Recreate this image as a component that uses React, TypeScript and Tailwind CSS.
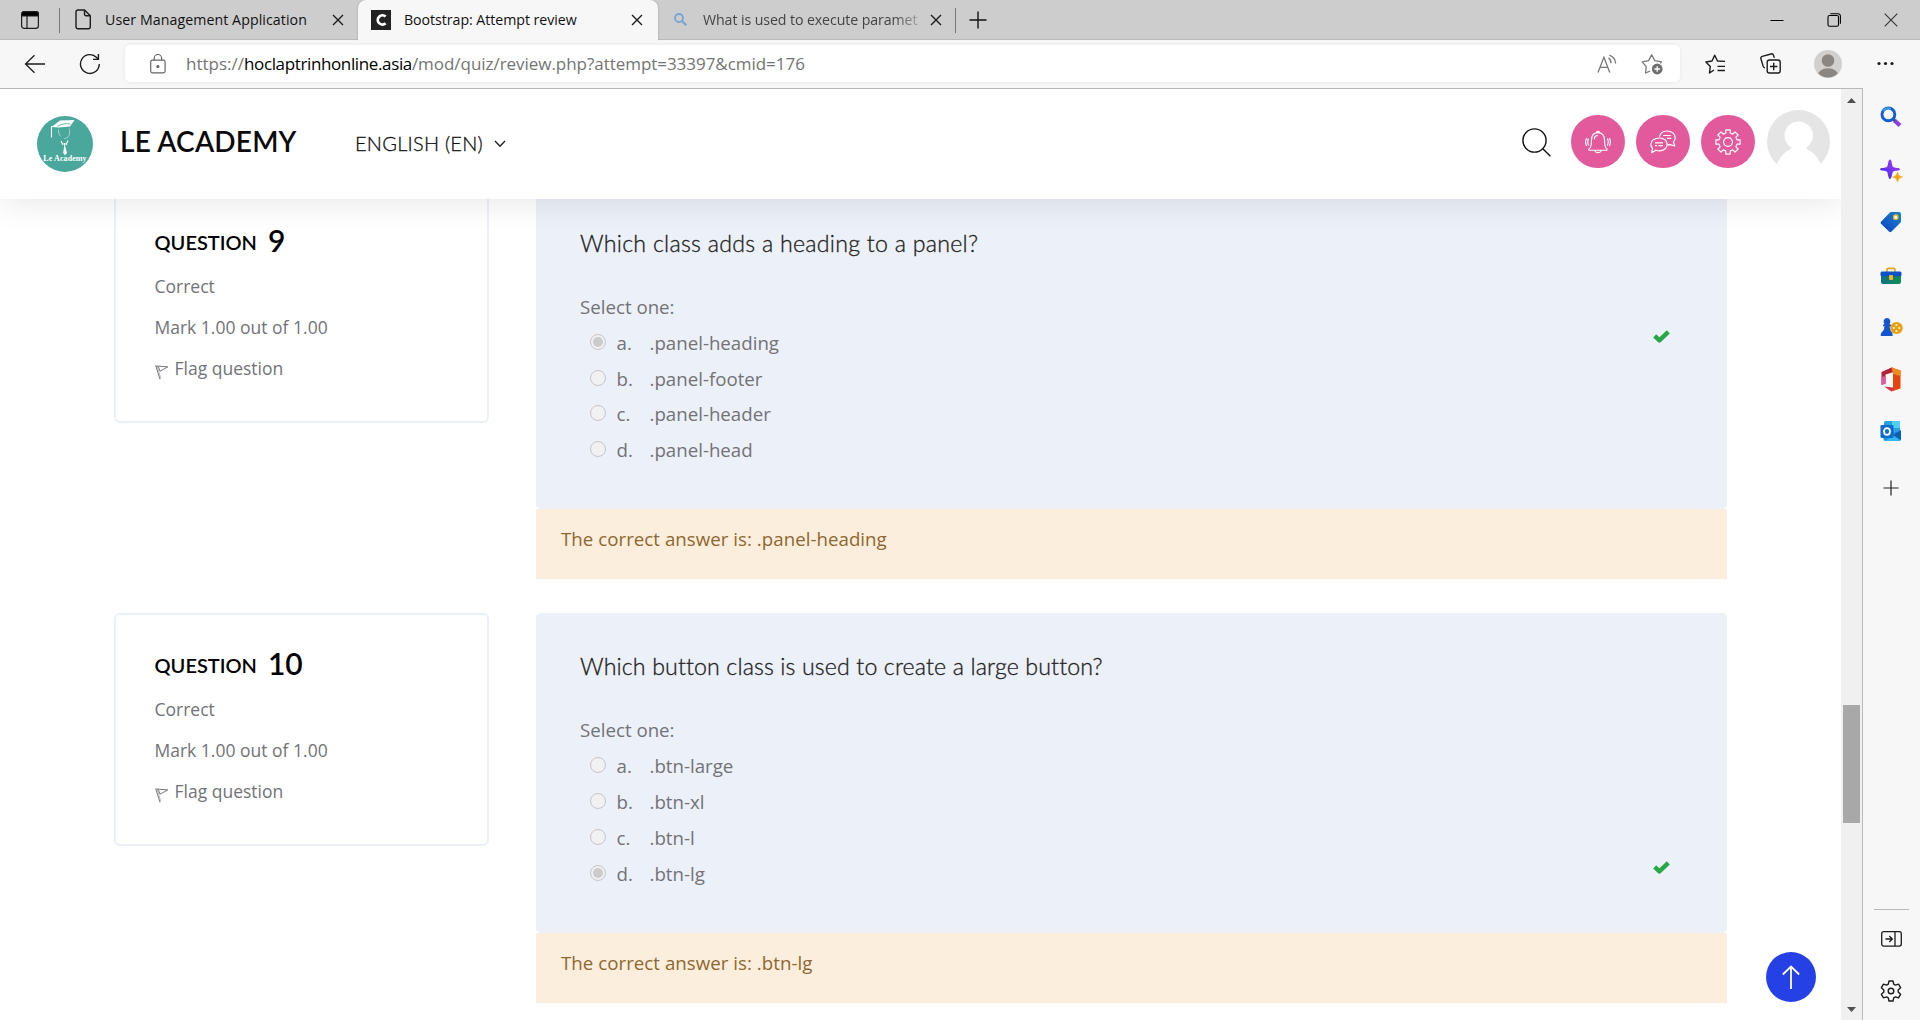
import React from "react";

function CloseIcon() {
  return (
    <svg width="12" height="12" viewBox="0 0 12 12" className="shrink-0" fill="none" stroke="#1c1c1c" strokeWidth="1.4">
      <path d="M1 1L11 11M11 1L1 11" />
    </svg>
  );
}

function TabBar() {
  return (
    <div className="relative flex h-10 shrink-0 items-stretch border-b border-[#b9b9b9] bg-[#cdcdcd] font-['Open_Sans',sans-serif] text-[14.2px] text-[#111]">
      <div className="flex w-[59px] items-center pl-[21px]">
        <svg width="18" height="18" viewBox="0 0 18 18" fill="none" stroke="#1c1c1c" strokeWidth="1.2">
          <rect x=".6" y=".6" width="16.8" height="16.8" rx="2.6" />
          <path d="M6 5V17.4" />
          <path d="M.6 5V3.2A2.6 2.6 0 0 1 3.2.6H14.8A2.6 2.6 0 0 1 17.4 3.2V5Z" fill="#000" />
        </svg>
      </div>
      <div className="mt-2 h-[25px] w-px bg-[#777]" />
      <div className="flex w-[298px] items-center pr-[14px] pl-[15px]">
        <svg width="17" height="21" viewBox="0 0 17 21" fill="none" stroke="#1c1c1c" strokeWidth="1.4" strokeLinejoin="round">
          <path d="M3 1H9.5L15.3 6.8V17.8A2 2 0 0 1 13.3 19.8H3A2 2 0 0 1 1 17.8V3A2 2 0 0 1 3 1Z" />
          <path d="M9.5 1V5.3A1.5 1.5 0 0 0 11 6.8H15.3" />
        </svg>
        <span className="ml-[13px] flex-1 tracking-[0.07px] whitespace-nowrap">User Management Application</span>
        <CloseIcon />
      </div>
      <div className="relative z-10 flex h-[41px] w-[300px] items-center rounded-t-lg bg-[#f7f7f7] pr-[15px] pb-px pl-[13px] shadow-[0_0_2px_rgba(0,0,0,0.25)] [clip-path:inset(-3px_-3px_0_-3px)]">
        <div className="flex size-5 items-center justify-center bg-[#222]">
          <svg width="12" height="14" viewBox="0 0 12 14" fill="none" stroke="#fff" strokeWidth="2.8">
            <path d="M10.6 3.6A4.6 4.6 0 1 0 10.6 10.2" />
          </svg>
        </div>
        <span className="ml-[13px] flex-1 tracking-[-0.05px] whitespace-nowrap">Bootstrap: Attempt review</span>
        <CloseIcon />
      </div>
      <div className="flex w-[297px] items-center pr-[13px] pl-4">
        <svg width="13" height="13" viewBox="0 0 13 13" fill="none" stroke="#76a5d3" strokeWidth="1.8">
          <circle cx="5" cy="5" r="4" />
          <path d="M8 8L12.3 12.3" strokeWidth="2.2" />
        </svg>
        <span className="ml-4 flex-1 overflow-hidden tracking-[-0.1px] whitespace-nowrap text-[#444] [mask-image:linear-gradient(to_right,#000_84%,transparent_99%)]">
          What is used to execute paramet
        </span>
        <CloseIcon />
      </div>
      <div className="mt-2 h-[25px] w-px bg-[#777]" />
      <div className="flex flex-1 items-center pl-[13px]">
        <svg width="18" height="18" viewBox="0 0 18 18" stroke="#111" strokeWidth="1.4">
          <path d="M9 .5V17.5M.5 9H17.5" />
        </svg>
      </div>
      <div className="flex items-center gap-[43px] pr-[22px]">
        <svg width="14" height="14" viewBox="0 0 14 14" stroke="#000" strokeWidth="1">
          <path d="M.5 7.5H13.5" />
        </svg>
        <svg width="14" height="14" viewBox="0 0 14 14" fill="none" stroke="#000" strokeWidth="1.1">
          <rect x="1" y="2.5" width="10.5" height="10.8" rx="1.6" />
          <path d="M3.3.7H11A2.3 2.3 0 0 1 13.4 3V10.8" />
        </svg>
        <svg width="14" height="14" viewBox="0 0 14 14" stroke="#333" strokeWidth="1.1">
          <path d="M.7.7L13.3 13.3M13.3.7L.7 13.3" />
        </svg>
      </div>
    </div>
  );
}

function Toolbar() {
  return (
    <div className="flex h-12 shrink-0 items-center bg-[#f7f7f7] pb-px">
      <div className="flex w-[125px] items-center pl-6">
        <svg width="22" height="20" viewBox="0 0 22 20" fill="none" stroke="#1c1c1c" strokeWidth="1.3">
          <path d="M21 10H1.5M10.5 1.3L1.5 10L10.5 18.7" />
        </svg>
        <svg width="22" height="22" viewBox="0 0 22 22" className="ml-[33px]" fill="none" stroke="#1c1c1c" strokeWidth="1.4">
          <path d="M20.3 11A9.4 9.4 0 1 1 17.6 4.4L19.2 6" />
          <path d="M19.4 1V6.4H14" />
        </svg>
      </div>
      <div className="flex h-[37px] w-[1555px] items-center rounded-[5px] bg-white pr-[17px] pl-[25px] shadow-[0_0_4px_rgba(0,0,0,0.07)]">
        <svg width="16" height="20" viewBox="0 0 16 20" fill="none" stroke="#666" strokeWidth="1.2">
          <rect x=".7" y="6.2" width="14.4" height="12.6" rx="1.8" />
          <path d="M4.2 6.2V4.2A3.7 3.7 0 0 1 11.6 4.2V6.2" />
          <circle cx="7.9" cy="12.5" r="1" fill="#666" />
        </svg>
        <div className="ml-5 flex flex-1 font-['Open_Sans',sans-serif] text-[17px] whitespace-nowrap text-[#747474]">
          <span>https://</span>
          <span className="tracking-[-0.37px] text-black">hoclaptrinhonline.asia</span>
          <span className="tracking-[-0.04px]">/mod/quiz/review.php?attempt=33397&amp;cmid=176</span>
        </div>
        <svg width="21" height="20" viewBox="0 0 21 20" fill="none" stroke="#777" strokeWidth="1.3">
          <path d="M1 18.5L6.9 3.2L12.8 18.5M3.2 13.3H10.6" />
          <path d="M11.5 3.8A6.5 6.5 0 0 1 14 9.2M12.4 1.2A9.5 9.5 0 0 1 18.6 9.5" />
        </svg>
        <svg width="22" height="22" viewBox="0 0 22 22" className="ml-[23px]" fill="none" stroke="#777" strokeWidth="1.3" strokeLinejoin="round">
          <path d="M9.2 18L4.6 20L5.2 13.6L1.2 8.9L7.6 7.6L10.6 1.8L13.8 7.6L20.4 8.9L19.2 10.4" />
          <circle cx="16.2" cy="16" r="5.4" fill="#6f6f6f" stroke="none" />
          <path d="M16.2 13.2V18.8M13.4 16H19" stroke="#fff" />
        </svg>
      </div>
      <div className="flex flex-1 items-center pl-[25px]">
        <svg width="21" height="20" viewBox="0 0 21 20" fill="none" stroke="#1c1c1c" strokeWidth="1.4" strokeLinejoin="round">
          <path d="M9 16L4.5 19L5.3 12.4L.9 8L7 7L9.7 1.2L12.5 7L20 7.4M12.5 12.4H20M12.5 16.5H20" />
        </svg>
        <svg width="21" height="21" viewBox="0 0 21 21" className="ml-[34px]" fill="none" stroke="#1c1c1c" strokeWidth="1.4">
          <rect x="7.2" y="7" width="13" height="13" rx="2.2" />
          <path d="M13.7 9.8V17.2M10 13.5H17.4" />
          <path d="M14.3 4.8L13.4 2.1A1.9 1.9 0 0 0 11 1L2.2 3.4A1.9 1.9 0 0 0 .9 5.8L3.2 13.4A2 2 0 0 0 5 14.8" />
        </svg>
        <svg width="28" height="28" viewBox="0 0 28 28" className="ml-[33px]">
          <defs>
            <clipPath id="profile">
              <circle cx="14" cy="14" r="13.6" />
            </clipPath>
          </defs>
          <circle cx="14" cy="14" r="14" fill="#d2d0ce" />
          <circle cx="14" cy="10.5" r="6.3" fill="#8a8683" />
          <ellipse cx="14" cy="26" rx="10.5" ry="7.8" fill="#8a8683" clipPath="url(#profile)" />
        </svg>
        <svg width="17" height="5" viewBox="0 0 17 5" className="ml-[35px]" fill="#1c1c1c">
          <circle cx="2" cy="2.5" r="1.6" />
          <circle cx="8.5" cy="2.5" r="1.6" />
          <circle cx="15" cy="2.5" r="1.6" />
        </svg>
      </div>
    </div>
  );
}

function Logo() {
  return (
    <div className="relative flex size-14 items-end justify-center rounded-full bg-[#4aa79b] pb-[9px]">
      <svg width="56" height="56" viewBox="0 0 56 56" className="absolute inset-0" fill="none" stroke="#fff" strokeWidth=".9">
        <path d="M14.5 11L23 4.5L37.5 4L33 10.5L22 11.5Z" fill="#fff" stroke="none" />
        <path d="M20.5 10.3C25 7.6 29 7.2 33.5 8" stroke="#4aa79b" strokeWidth=".8" />
        <path d="M14.5 10V21.5" strokeWidth="1.1" />
        <path d="M21.5 13.5C21.2 17 22.5 19 24 20.5M27 22.5C31.5 22.5 34 18 32 12.5" strokeWidth=".7" opacity=".7" />
        <path d="M24 25L26 29M29 29L31 24.5" strokeWidth="1.1" />
        <path d="M26.3 27L28.8 27L28 29.5L30 37L28 39.3L26.2 37L27.3 29.5Z" fill="#fff" stroke="none" />
      </svg>
      <span className="relative font-['Liberation_Serif',serif] text-[8px] leading-none font-bold tracking-[0.1px] whitespace-nowrap text-white">Le Academy</span>
    </div>
  );
}

function Round({ children }: { children: React.ReactNode }) {
  return <div className="flex h-[53px] w-[54px] items-center justify-center rounded-full bg-[#e25a9b]">{children}</div>;
}

function Header() {
  return (
    <header className="relative z-10 flex h-[110px] shrink-0 items-center bg-white pl-[37px] font-['Lato',sans-serif] shadow-[0_5px_30px_rgba(0,0,0,0.09)]">
      <Logo />
      <span className="mb-[7px] ml-[27px] w-[235px] text-[28px] leading-9 font-semibold tracking-[0.2px] text-[#0b0b0b]">LE ACADEMY</span>
      <span className="mb-[3px] text-[20px] leading-7 font-light tracking-[0.25px] text-[#111] [-webkit-text-stroke:0.3px_#111]">ENGLISH (EN)</span>
      <svg width="12" height="8" viewBox="0 0 12 8" className="ml-[11px]" fill="none" stroke="#222" strokeWidth="1.4">
        <path d="M1 1L6 6.3L11 1" />
      </svg>
      <div className="mb-[5px] ml-auto flex items-center">
        <svg width="29" height="29" viewBox="0 0 29 29" className="mt-[2px] mr-5" fill="none" stroke="#111" strokeWidth="1.4">
          <circle cx="12.5" cy="12.5" r="11.6" />
          <path d="M20.8 20.8L28.4 28.2" />
        </svg>
        <div className="flex gap-[11px]">
          <Round>
            <svg width="26" height="24" viewBox="0 0 26 24" fill="none" stroke="#fff" strokeWidth="1.1">
              <path d="M11.5 2.4A1.6 1.6 0 0 1 14.5 2.4M4.5 20.2H21.5C22.4 20.2 22.4 19 21.5 18.5C19.8 17.3 19.6 14 19.6 10.5C19.6 5.5 17 2.6 13 2.6C9 2.6 6.4 5.5 6.4 10.5C6.4 14 6.2 17.3 4.5 18.5C3.6 19 3.6 20.2 4.5 20.2ZM9.8 20.4A3.3 3 0 0 0 16.2 20.4M9.2 9.5C9.3 7 10.6 5.6 12.8 5.4" />
              <path d="M3.6 8.5Q1.9 12 3.6 15.5M1.6 8Q-.4 12 1.6 16M22.4 8.5Q24.1 12 22.4 15.5M24.4 8Q26.4 12 24.4 16" />
            </svg>
          </Round>
          <Round>
            <svg width="26" height="24" viewBox="0 0 26 24" fill="none" stroke="#fff" strokeWidth="1.2" strokeLinejoin="round">
              <path d="M9.4 6.6C10.2 3.3 13.2 1 17 1C21.6 1 25.2 3.8 25.2 7.6C25.2 9.6 24.5 11 23.4 12.2L24.8 16L20 14.6L17.4 14.9" />
              <path d="M9.4 8C13.8 8 17.2 10.8 17.2 14.3C17.2 18 13.8 20.8 9.4 20.8C8.2 20.8 7 20.6 6 20.2L1.6 22.6L2.6 18.4C1.4 17.3.8 15.9.8 14.3C.8 10.8 4.6 8 9.4 8Z" />
              <path d="M5 12.8H13M5 15.6H7M8.3 15.6H13M13 5.5H21M17 8.4H21.3" />
            </svg>
          </Round>
          <Round>
            <svg width="26" height="26" viewBox="0 0 26 26" fill="none" stroke="#fff" strokeWidth="1.2" strokeLinejoin="round">
              <circle cx="13" cy="13" r="4.4" />
              <path d="M10.8 .9H15.2V4L17.8 5.1L20 2.9L23.1 6L20.9 8.2L22 10.8H25.1V15.2H22L20.9 17.8L23.1 20L20 23.1L17.8 20.9L15.2 22V25.1H10.8V22L8.2 20.9L6 23.1L2.9 20L5.1 17.8L4 15.2H.9V10.8H4L5.1 8.2L2.9 6L6 2.9L8.2 5.1L10.8 4Z" />
            </svg>
          </Round>
        </div>
        <svg width="63" height="63" viewBox="0 0 63 63" className="mr-[11px] ml-3">
          <circle cx="31.5" cy="31.5" r="31.5" fill="#e5e5e5" />
          <ellipse cx="31.7" cy="25.5" rx="14.2" ry="14" fill="#fff" />
          <path d="M9.5 55C14 44 21 38 31.7 38C42 38 50 44 54 55V63H9.5Z" fill="#fff" />
          <path d="M26 35H37.5L41 40H22.5Z" fill="#fff" />
        </svg>
      </div>
    </header>
  );
}

type Question = {
  num: string;
  title: string;
  options: string[];
  right: number;
  titleClass: string;
  panelClass: string;
  rowClass: string;
};

const questions: Question[] = [
  {
    num: "9",
    title: "Which class adds a heading to a panel?",
    options: [".panel-heading", ".panel-footer", ".panel-header", ".panel-head"],
    right: 0,
    titleClass: "tracking-[0.25px]",
    panelClass: "h-[319px]",
    rowClass: "h-[35.7px]",
  },
  {
    num: "10",
    title: "Which button class is used to create a large button?",
    options: [".btn-large", ".btn-xl", ".btn-l", ".btn-lg"],
    right: 3,
    titleClass: "tracking-[0.12px]",
    panelClass: "h-[320px]",
    rowClass: "h-[35.9px]",
  },
];

function QuestionBlock({ q }: { q: Question }) {
  return (
    <section className="flex h-[423px] shrink-0 items-start pl-[114px] font-['Open_Sans',sans-serif] text-[#727377]">
      <aside className="h-[233px] w-[375px] rounded-md border-2 border-[#ebeff7] pt-[28px] pl-[38.5px] text-[17.5px] leading-[41px]">
        <div className="mb-[6px] flex items-baseline font-['Lato',sans-serif] text-[30px] leading-9 font-semibold text-black">
          <span className="mr-[11px] text-[20px]">QUESTION</span>
          <span className="translate-y-[2px]">{q.num}</span>
        </div>
        <div>Correct</div>
        <div>Mark 1.00 out of 1.00</div>
        <div className="flex items-center">
          <svg width="14" height="15" viewBox="0 0 14 15" className="mt-[7px] mr-[6px]" fill="none" stroke="#777" strokeWidth="1">
            <path d="M.8 .9L5 14.3M.5 .9L12.8 1.9L5 6.2L3.3 1.4" />
            <path d="M2.2 1.2L5.8 13.5" strokeWidth=".5" />
          </svg>
          Flag question
        </div>
      </aside>
      <div className="ml-[47px] w-[1191px] text-[18.7px]">
        <div className={"rounded-[5px] bg-[#ecf0f8] pt-9 pl-[44px] " + q.panelClass}>
          <h2
            className={
              "h-[35px] font-['Lato',sans-serif] text-[23.2px] leading-[35px] font-light text-[#222] [-webkit-text-stroke:0.3px_#222] " +
              q.titleClass
            }
          >
            {q.title}
          </h2>
          <div className="mt-[28px] h-9 leading-9">Select one:</div>
          {q.options.map((o, i) => (
            <div key={o} className={"flex items-center leading-9 " + q.rowClass}>
              <span className="mb-[2px] ml-[9.5px] flex size-[16px] items-center justify-center rounded-full border border-[#c6c6c8] bg-[#f1f1f3]">
                {i === q.right && <span className="size-[10px] shrink-0 rounded-full bg-[#cbcbcd]" />}
              </span>
              <span className="ml-[11px] w-[31px]">{"abcd"[i]}.</span>
              <span className="ml-[2px] flex-1">{o}</span>
              {i === q.right && (
                <svg width="17" height="14" viewBox="0 0 17 14" className="mr-[57px] mb-[11px]" fill="none" stroke="#28a745" strokeWidth="4.3" strokeLinejoin="round">
                  <path d="M1.7 5.9L6.4 10.4L15.3 1.9" />
                </svg>
              )}
            </div>
          ))}
        </div>
        <div className="h-[70px] bg-[#fceedc] pt-3 pl-[25px] leading-9 tracking-[0.03px] text-[#8f6730]">
          The correct answer is: {q.options[q.right]}
        </div>
      </div>
    </section>
  );
}

function SideRail() {
  return (
    <nav className="flex w-[57px] shrink-0 flex-col items-center bg-[#f7f7f7] pt-[18px] pr-px">
      <svg width="22" height="22" viewBox="0 0 22 22" fill="none">
        <path d="M14.5 14.5L20 19.5" stroke="#8a3ff0" strokeWidth="4.2" />
        <path d="M12.8 12.8L15.4 15.4" stroke="#5a4a9a" strokeWidth="3" />
        <circle cx="8.4" cy="8.4" r="6.4" stroke="#0f5fd0" strokeWidth="2.9" />
        <path d="M3 5A6.4 6.4 0 0 1 11 2.6" stroke="#3fa3e0" strokeWidth="1.8" />
      </svg>
      <svg width="23" height="23" viewBox="0 0 23 23" className="mt-[31px]">
        <defs>
          <linearGradient id="spark" x1="0" y1="1" x2="1" y2="0">
            <stop offset="0" stopColor="#3a2be8" />
            <stop offset="1" stopColor="#b03cf5" />
          </linearGradient>
          <linearGradient id="tag" x1="0" y1="1" x2="1" y2="0">
            <stop offset="0" stopColor="#0a3fc8" />
            <stop offset="1" stopColor="#1a86c4" />
          </linearGradient>
          <linearGradient id="case" x1="0" y1="0" x2="1" y2="0">
            <stop offset="0" stopColor="#12707f" />
            <stop offset="1" stopColor="#0d8f57" />
          </linearGradient>
        </defs>
        <path d="M10 .5C12 .5 11.8 6.5 13 8C14.5 9.2 20 8.5 20 10.3C20 12 14.5 11.5 13 12.7C11.8 14 12 20 10 20C8 20 8.2 14 7 12.7C5.5 11.5 0 12 0 10.3C0 8.5 5.5 9.2 7 8C8.2 6.5 8 .5 10 .5Z" fill="url(#spark)" />
        <path d="M17.5 13C18.5 16.5 19 17 22.5 18C19 19 18.5 19.5 17.5 23C16.5 19.5 16 19 12.5 18C16 17 16.5 16.5 17.5 13Z" fill="#f2a60d" stroke="#f2a60d" strokeWidth=".6" />
      </svg>
      <svg width="22" height="22" viewBox="0 0 22 22" className="mt-[29px]">
        <path d="M11.5 1H19Q21 1 21 3V10Q21 11 20.3 11.7L11.3 20.8Q10.3 21.6 9.3 20.8L1 12.7Q.2 11.7 1 10.8L9.5 2Q10.3 1 11.5 1Z" fill="url(#tag)" />
        <circle cx="15.8" cy="6.2" r="2.2" fill="#fff" stroke="#f0b51e" strokeWidth="1.3" />
      </svg>
      <svg width="22" height="18" viewBox="0 0 22 18" className="mt-[34px]">
        <path d="M7 5V3Q7 1.3 8.7 1.3H13.3Q15 1.3 15 3V5" fill="none" stroke="#e8a317" strokeWidth="1.7" />
        <path d="M1 8H21V15Q21 17 19 17H3Q1 17 1 15Z" fill="url(#case)" />
        <path d="M.5 6Q.5 4.5 2 4.5H20Q21.5 4.5 21.5 6V8Q21.5 9.3 20 9.3H2Q.5 9.3 .5 8Z" fill="#1050c8" />
        <rect x="9" y="8" width="4" height="5" rx="1" fill="#f0b429" />
      </svg>
      <svg width="23" height="20" viewBox="0 0 23 20" className="mt-[32px]">
        <ellipse cx="16.5" cy="11" rx="6.3" ry="6" fill="#e6a014" />
        <g fill="#fff3d0">
          <circle cx="16.5" cy="8" r="1.1" />
          <circle cx="19.3" cy="11" r="1.1" />
          <circle cx="16.5" cy="14" r="1.1" />
          <circle cx="13.7" cy="11" r="1.1" />
        </g>
        <path d="M7 1A3.6 3.6 0 0 1 9.5 7L11 8V9.3H9.7C9.8 12.5 10.5 14 12 15.5Q13 17 12.5 19H.8Q.3 17 1.5 15.5C3.5 14 4.3 12.5 4.4 9.3H3V8L4.5 7A3.6 3.6 0 0 1 7 1Z" fill="#1454cf" />
      </svg>
      <svg width="22" height="25" viewBox="0 0 22 25" className="mt-[30px]">
        <path d="M11.5 .5L1.5 5V18L5.5 16.5V7.5L13 5.2V.8Z" fill="#b3203a" />
        <path d="M1.5 10V18L5.5 16.5V9Z" fill="#e0569a" />
        <path d="M11.5 .5L20.5 3.5V21.5L11.5 24.5L13 22V4.5Z" fill="#e2460c" />
        <path d="M11.5 .5L20.5 3.5V9L13 7Z" fill="#f08a1c" />
        <path d="M4 19.5L13 20.5V23L11.5 24.5Z" fill="#d6304a" />
      </svg>
      <svg width="22" height="22" viewBox="0 0 22 22" className="mt-7">
        <rect x="4" y="1" width="16" height="15" rx="1.5" fill="#28a0e8" />
        <rect x="12" y="1" width="8" height="7" fill="#4fd0f5" />
        <path d="M3.5 12H21V19Q21 21 19 21H5.5Q3.5 21 3.5 19Z" fill="#1b8fe0" />
        <path d="M21 10V20L13 15Z" fill="#0d5fb0" />
        <path d="M13 15.5L20.5 20.5Q20 21 19 21H5Z" fill="#35b8f0" />
        <rect x=".5" y="5" width="13" height="13" rx="1.3" fill="#0f6cc9" />
        <ellipse cx="7" cy="11.5" rx="3" ry="3.3" fill="none" stroke="#fff" strokeWidth="1.8" />
      </svg>
      <svg width="16" height="16" viewBox="0 0 16 16" className="mt-[38px]" stroke="#222" strokeWidth="1.2">
        <path d="M8 .5V15.5M.5 8H15.5" />
      </svg>
      <div className="mt-auto h-px w-[35px] bg-[#b9b9b9]" />
      <svg width="21" height="16" viewBox="0 0 21 16" className="mt-[21px]" fill="none" stroke="#1c1c1c" strokeWidth="1.3">
        <rect x=".7" y=".7" width="19.6" height="14.4" rx="2" />
        <path d="M14 .7V15M4.5 8H11M8.3 5L11.3 8L8.3 11" />
      </svg>
      <svg width="22" height="22" viewBox="0 0 22 22" className="mt-[33px] mb-[18px]" fill="none" stroke="#1c1c1c" strokeWidth="1.4" strokeLinejoin="round">
        <circle cx="11" cy="11" r="2.8" />
        <path d="M9 1H13L13.7 4.1L15.4 5.1L18.5 4.2L20.6 7.7L18.2 9.9V12.1L20.6 14.3L18.5 17.8L15.4 16.9L13.7 17.9L13 21H9L8.3 17.9L6.6 16.9L3.5 17.8L1.4 14.3L3.8 12.1V9.9L1.4 7.7L3.5 4.2L6.6 5.1L8.3 4.1Z" />
      </svg>
    </nav>
  );
}

function Scrollbar() {
  return (
    <div className="flex w-[21px] shrink-0 flex-col items-center bg-[#f0f0f0] py-[9px]">
      <div className="h-[5px] w-[9px] bg-[#505050] [clip-path:polygon(50%_0,100%_100%,0_100%)]" />
      <div className="mt-[602px] h-[118px] w-[17px] bg-[#a8a8a8]" />
      <div className="mt-auto mb-[-1px] h-[5px] w-[9px] bg-[#505050] [clip-path:polygon(0_0,100%_0,50%_100%)]" />
    </div>
  );
}

export default function App() {
  return (
    <div className="flex h-[1020px] w-[1920px] flex-col overflow-hidden bg-[#f7f7f7]">
      <TabBar />
      <Toolbar />
      <div className="flex min-h-0 flex-1">
        <div className="flex min-w-0 flex-1 border-t border-r border-[#b9b9b9]">
          <main className="relative flex flex-1 flex-col overflow-hidden bg-white">
            <Header />
            <div className="-mt-[9px] flex flex-col">
              {questions.map((q) => (
                <QuestionBlock key={q.num} q={q} />
              ))}
            </div>
            <button className="absolute right-[25px] bottom-[18px] flex size-[50px] items-center justify-center rounded-full bg-[#2541e6]">
              <svg width="18" height="24" viewBox="0 0 18 24" fill="none" stroke="#fff" strokeWidth="1.8">
                <path d="M9 24V1.5M.8 9.5L9 1.5L17.2 9.5" />
              </svg>
            </button>
          </main>
          <Scrollbar />
        </div>
        <SideRail />
      </div>
    </div>
  );
}
